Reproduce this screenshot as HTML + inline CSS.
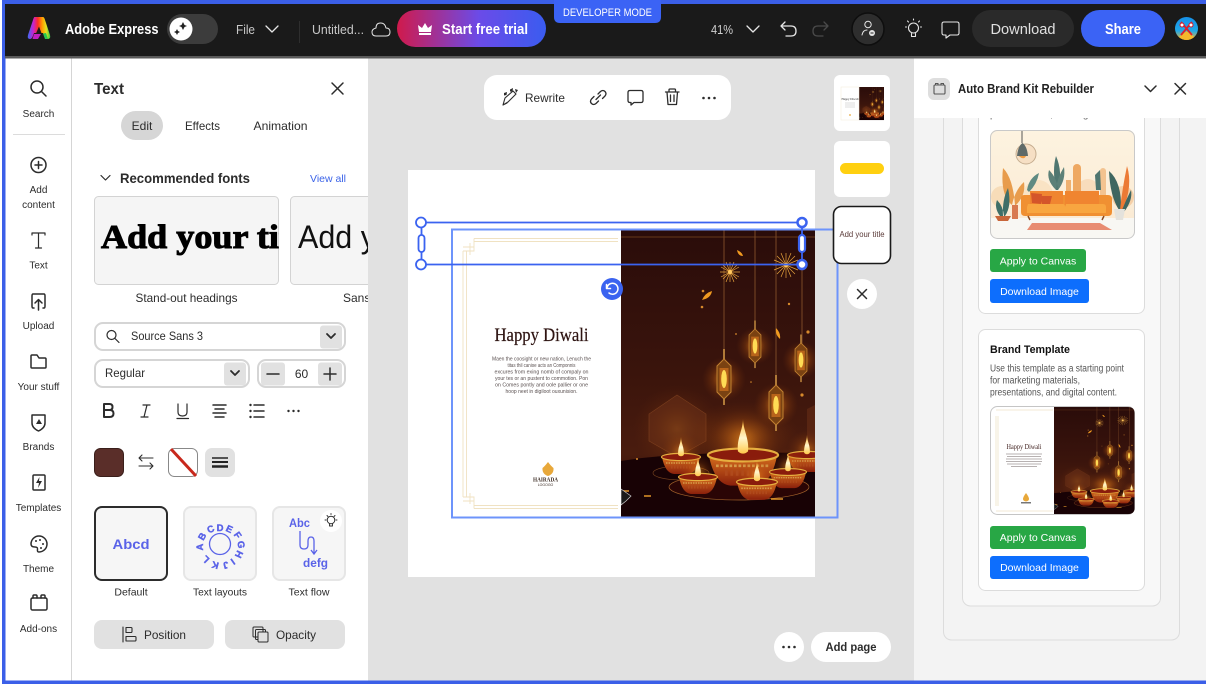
<!DOCTYPE html>
<html lang="en"><head><meta charset="utf-8"><title>Adobe Express</title>
<style>
html,body{margin:0;padding:0;background:#fff;width:1206px;height:686px;overflow:hidden}
svg{display:block}
text{font-family:"Liberation Sans",sans-serif;fill:#2c2c2c}
.i{fill:none;stroke:#2c2c2c;stroke-width:1.5;stroke-linecap:round;stroke-linejoin:round}
.h{fill:none;stroke:#e6e6e6;stroke-width:1.3;stroke-linecap:round;stroke-linejoin:round}
.r{font-size:10px;text-anchor:middle}
.w{fill:#fff!important}
</style></head><body>
<svg width="1206" height="686" viewBox="0 0 1206 686" xmlns="http://www.w3.org/2000/svg">
<defs>
<linearGradient id="trial" x1="0" x2="1" y1="0" y2="0"><stop offset="0" stop-color="#d01a4c"/><stop offset=".55" stop-color="#6b4be8"/><stop offset="1" stop-color="#3a5cf0"/></linearGradient>
<linearGradient id="logo" x1="0" x2="1" y1="0" y2="0"><stop offset="0" stop-color="#3b6cf5"/><stop offset=".25" stop-color="#c822d0"/><stop offset=".45" stop-color="#ff2f24"/><stop offset=".65" stop-color="#ffa000"/><stop offset=".82" stop-color="#e8e020"/><stop offset="1" stop-color="#28d048"/></linearGradient>
<linearGradient id="bg" x1="0" x2="0" y1="0" y2="1"><stop offset="0" stop-color="#2a0c0a"/><stop offset=".5" stop-color="#3a140c"/><stop offset=".78" stop-color="#4a1c0e"/><stop offset="1" stop-color="#2b0a06"/></linearGradient>
<radialGradient id="glow"><stop offset="0" stop-color="#ff9a20" stop-opacity=".8"/><stop offset=".5" stop-color="#c8600f" stop-opacity=".28"/><stop offset="1" stop-color="#8a3a08" stop-opacity="0"/></radialGradient>
<linearGradient id="bowl" x1="0" x2="0" y1="0" y2="1"><stop offset="0" stop-color="#d8701e"/><stop offset="1" stop-color="#8a200c"/></linearGradient>
<linearGradient id="flame" x1="0" x2="0" y1="0" y2="1"><stop offset="0" stop-color="#ffb52e"/><stop offset=".55" stop-color="#fff6cc"/><stop offset="1" stop-color="#ffc94a"/></linearGradient>
<linearGradient id="wall" x1="0" x2="0" y1="0" y2="1"><stop offset="0" stop-color="#fdf3e0"/><stop offset="1" stop-color="#fae9d2"/></linearGradient>
<linearGradient id="avatar" x1="0" x2="0" y1="0" y2="1"><stop offset="0" stop-color="#1690e8"/><stop offset=".6" stop-color="#20a8e8"/><stop offset="1" stop-color="#f6b52c"/></linearGradient>
<clipPath id="artclip"><rect width="194" height="288"/></clipPath>
<clipPath id="c1"><rect x="94" y="196" width="185" height="89" rx="4"/></clipPath>
<clipPath id="c2"><rect x="290" y="190" width="78" height="120"/></clipPath>
<clipPath id="c3"><rect x="990" y="130" width="145" height="108" rx="7"/></clipPath>
<clipPath id="c4"><path d="M1054 407H1128Q1134.500 407 1134.500 413V508Q1134.500 514 1128 514H1054Z"/></clipPath>
<clipPath id="av"><circle cx="1186.5" cy="28.5" r="11.5"/></clipPath>
<g id="lan">
<circle r="22" fill="url(#glow)"/>
<path d="M0 -30V-20" stroke="#b07a38" stroke-width="2"/>
<path d="M-7-13 0-20 7-13V13L0 20-7 13Z" fill="#7a4212" stroke="#c08030" stroke-width="1"/>
<path d="M0 20V26" stroke="#b07a38" stroke-width="2"/>
<rect x="-4.500" y="-11" width="9" height="23" fill="#b8641a"/>
<ellipse rx="2.800" ry="9" fill="#ffdc55"/>
</g>
<g id="dl">
<circle cy="-5" r="20" fill="url(#glow)" opacity=".7"/>
<path d="M-19 0Q-16 16 -7 17H7Q16 16 19 0Z" fill="url(#bowl)"/>
<ellipse rx="19.500" ry="3.600" fill="#8a1c0c" stroke="#e6b040" stroke-width="1.200"/>
<path d="M-2.800-2C-3.600-9 0-14 0-20C0-14 3.600-9 2.800-2Q0 .5-2.800-2Z" fill="url(#flame)"/>
<path d="M-15 6H15" stroke="#d69a48" stroke-width="1.500" stroke-dasharray="1.500 1"/>
<path d="M-10 10H10" stroke="#b04a1c" stroke-width="3" stroke-dasharray="1.500 1.500"/>
</g>
<g id="art">
<g clip-path="url(#artclip)">
<rect width="194" height="288" fill="url(#bg)"/>
<path d="M0 8H194M0 270H194M0 275H194" stroke="#7a4520" stroke-width=".8"/>
<path d="M103 0V132M134 0V100M155 0V150M181 0V115" stroke="#7a4826" stroke-width="1"/>
<circle cx="56" cy="200" r="44" fill="url(#glow)" opacity=".45"/>
<path d="M56 166 85 185V212L56 228 28 212V185Z" fill="#6a3018" opacity=".55" stroke="#a0582a" stroke-width=".6"/>
<path d="M186 180 194 176V222L186 218Z" fill="#6a3018" opacity=".55"/>
<ellipse cx="122" cy="206" rx="56" ry="34" fill="url(#glow)" opacity=".6"/>
<path d="M0 232Q60 222 194 224V288H0Z" fill="#180205"/>
<ellipse cx="118" cy="258" rx="70" ry="13" fill="#2a0505" stroke="#a0602a" stroke-width=".7"/>
<ellipse cx="60" cy="244" rx="28" ry="7" fill="none" stroke="#7a4520" stroke-width=".6"/>
<path d="M0 262H8M23 267H30M150 270H162M85 246H97" stroke="#e0952a" stroke-width="1.600"/>
<use href="#lan" x="103" y="150"/>
<g transform="translate(134 117) scale(.85)"><use href="#lan"/></g>
<use href="#lan" x="155" y="176"/>
<g transform="translate(180 131) scale(.85)"><use href="#lan"/></g>
<g stroke="#e6a23c" stroke-width=".7">
<path d="M109 43 99 43M109 43 119 43M109 43 109 33M109 43 109 53M109 43 102 36M109 43 116 36M109 43 102 50M109 43 116 50M109 43 100 38M109 43 118 48M109 43 100 48M109 43 118 38M109 43 105 33M109 43 113 53M109 43 113 33M109 43 105 53"/>
<path d="M165 36 152 36M165 36 178 36M165 36 165 24M165 36 165 49M165 36 156 27M165 36 174 27M165 36 156 45M165 36 174 45M165 36 153 31M165 36 177 41M165 36 153 41M165 36 177 31M165 36 160 24M165 36 170 48M165 36 170 24M165 36 160 48"/>
</g>
<circle cx="109" cy="43" r="2" fill="#ffc860"/><circle cx="165" cy="36" r="2" fill="#ffc860"/>
<path d="M91 62Q84 64 81 71 90 69 91 62ZM116 21Q121 23 122 27 117 27 116 21ZM155 99Q160 104 159 110 154 106 155 99Z" fill="#f09a20"/>
<g fill="#d88a2c"><circle cx="82" cy="62" r="1.300"/><circle cx="81" cy="78" r="1.300"/><circle cx="187" cy="103" r="1.600"/><circle cx="168" cy="75" r="1.200"/><circle cx="181" cy="166" r="1.600"/><circle cx="115" cy="105" r=".9"/><circle cx="16" cy="230" r="1"/><circle cx="130" cy="153" r=".8"/></g>
<use href="#dl" x="60" y="228"/>
<use href="#dl" x="186" y="226"/>
<g transform="translate(122 226) scale(1.800)"><use href="#dl"/></g>
<g transform="translate(77 248) scale(1)"><use href="#dl"/></g>
<g transform="translate(167 243) scale(.95)"><use href="#dl"/></g>
<g transform="translate(136 253) scale(1.050)"><use href="#dl"/></g>
<path d="M0 260 10 267 5 272 0 276Z" fill="#1a1a1a" stroke="#ccc" stroke-width=".7"/>
</g>
</g>
</defs>

<!-- frame -->
<rect width="1206" height="686" fill="#fff"/>
<rect x="368" y="58" width="546" height="624" fill="#e1e1e1"/>
<rect x="914" y="118" width="292" height="563" fill="#f3f3f3"/>
<rect x="71" y="58" width="1" height="624" fill="#d5d5d5"/>
<rect y="0" x="2" width="1204" height="4" fill="#3b5fe8"/>
<rect x="2" y="0" width="3.500" height="684" fill="#3b5fe8"/>
<rect x="2" y="680.500" width="1204" height="3.500" fill="#3b5fe8"/>

<!-- header -->
<rect x="5" y="4" width="1201" height="52" fill="#1a1a1a"/>
<rect x="5" y="56" width="1201" height="2.500" fill="#5a5a5a"/>
<path d="M34.500 17H43Q44 17 44.500 18.500L50 35Q51 39 47.500 39 45.500 39 44.500 37L43 33H34L32.500 37Q31.500 39 30 39 27 39 28 35L33.500 18.500Q34 17 34.500 17Z" fill="url(#logo)"/>
<path d="M39 26.500 35.500 34.500H42Z" fill="#1a1a1a"/>
<path d="M34 34H42L44 39H32.500Z" fill="#c020c0"/>
<path d="M38 39 41.500 33 44.500 39Z" fill="#1a1a1a"/>
<path d="M43 33.500 45 39H48L46 33Z" fill="#28c850"/>
<text x="65" y="34" class="w" font-size="14.500" font-weight="700" textLength="93.500" lengthAdjust="spacingAndGlyphs">Adobe Express</text>
<rect x="167" y="14" width="51" height="30" rx="15" fill="#3c3c3c"/>
<circle cx="181" cy="29" r="11.500" fill="#fff"/>
<path d="M183 22 184.500 25 187 26 184.500 27 183 30 181.500 27 179 26 181.500 25ZM177 29 178 31 180 32 178 33 177 35 176 33 174 32 176 31Z" fill="#222"/>
<text x="236" y="34" font-size="12.500" style="fill:#c8c8c8" textLength="19" lengthAdjust="spacingAndGlyphs">File</text>
<path d="M266 26 272 32 278 26" class="h"/>
<rect x="299" y="21" width="1" height="22" fill="#2e2e2e"/>
<text x="312" y="34" font-size="12.500" style="fill:#c8c8c8" textLength="52" lengthAdjust="spacingAndGlyphs">Untitled...</text>
<path d="M376 36H386Q390 36 390 32 390 28 386 28 385 23 380.500 23 376 23 376 28 372 29 372 32 372 36 376 36Z" class="h" style="stroke-width:1"/>
<rect x="397" y="10" width="149" height="37" rx="18.500" fill="url(#trial)"/>
<path d="M418 25 422 28 425 23 428 28 432 25 431 32H419ZM419 33H431V35H419Z" fill="#fff"/>
<text x="442" y="34" class="w" font-size="14.500" font-weight="700" textLength="86" lengthAdjust="spacingAndGlyphs">Start free trial</text>
<path d="M554 0H661V17Q661 23 655 23H560Q554 23 554 17Z" fill="#3b63f5"/>
<text x="607.500" y="16" text-anchor="middle" class="w" font-size="11" textLength="89" lengthAdjust="spacingAndGlyphs">DEVELOPER MODE</text>
<text x="711" y="34" font-size="12.500" style="fill:#d0d0d0" textLength="22" lengthAdjust="spacingAndGlyphs">41%</text>
<path d="M747 26 753 32 759 26" class="h"/>
<path d="M785 22 781 26 785 30M781 26H791Q796 26 796 31 796 36 791 36H786" class="h"/>
<path d="M824 22 828 26 824 30M828 26H818Q813 26 813 31 813 36 818 36H823" class="h" style="stroke:#4a4a4a"/>
<circle cx="868" cy="29" r="16" fill="#2e2e2e" stroke="#0e0e0e" stroke-width="1.500"/>
<circle cx="868" cy="24.500" r="3.200" class="h" style="stroke-width:1"/>
<path d="M862 35Q863 30 867 30" class="h" style="stroke-width:1"/>
<circle cx="872" cy="33" r="3" fill="#e6e6e6"/><path d="M870.500 33H873.500" stroke="#222"/>
<circle cx="913.500" cy="28" r="5" class="h" style="stroke-width:1.100"/>
<path d="M911.500 33.500V36.500H915.500V33.500M905.500 27H906.500M920.500 27H921.500M907.500 21 908.500 22M919.500 21 918.500 22M913.500 19V20" class="h" style="stroke-width:1.100"/>
<path d="M944 22H957Q959 22 959 24V33Q959 35 957 35H950L946 38V35H944Q942 35 942 33V24Q942 22 944 22Z" class="h" style="stroke-width:1.100"/>
<rect x="972" y="10" width="102" height="37" rx="18.500" fill="#2a2a2a"/>
<text x="1023" y="34" text-anchor="middle" font-size="14.500" style="fill:#e0e0e0" textLength="65" lengthAdjust="spacingAndGlyphs">Download</text>
<rect x="1081" y="10" width="84" height="37" rx="18.500" fill="#3b63f5"/>
<text x="1123" y="34" text-anchor="middle" class="w" font-size="14.500" font-weight="700" textLength="36" lengthAdjust="spacingAndGlyphs">Share</text>
<circle cx="1186.500" cy="28.500" r="11.500" fill="url(#avatar)"/>
<g clip-path="url(#av)"><path d="M1175 40 1186.500 31 1198 40Z" fill="#f5b82c"/><path d="M1181 22 1192 35M1192 22 1181 35" stroke="#e0202a" stroke-width="1.800"/><circle cx="1182" cy="25" r="2" fill="#fff" stroke="#d01a2a"/><circle cx="1191" cy="25" r="2" fill="#fff" stroke="#d01a2a"/></g>

<!-- left rail -->
<g class="i">
<circle cx="37" cy="87" r="6"/><path d="M41.500 91.500 46 96"/>
<circle cx="38.500" cy="165" r="7.500"/><path d="M38.500 161.500V168.500M35 165H42"/>
<path d="M32 235V233H45V235M38.500 233V248M35.500 248H41.500" stroke-width="1.200"/>
<path d="M34 308H33Q32 308 32 306V296Q32 294 33 294H44Q45 294 45 296V306Q45 308 44 308H43M38.500 310V300M35 303 38.500 299.500 42 303"/>
<path d="M31 367V356Q31 355 32 355H37L39 358H45Q46 358 46 359V367Q46 368 45 368H32Q31 368 31 367Z"/>
<path d="M32 415H45V423Q45 428 38.500 431 32 428 32 423Z"/>
<rect x="33" y="475" width="12" height="15" rx="1"/>
<path d="M31 544A8 8 0 1 1 39 552Q37 552 37.500 549.500 38 547 35 547 31 547 31 544Z"/>
<rect x="31" y="598" width="16" height="12" rx="1.500"/><path d="M33 598V596Q33 595 34 595H36Q37 595 37 596V598M41 598V596Q41 595 42 595H44Q45 595 45 596V598"/>
</g>
<path d="M36 424 39 419 42 424Z" fill="#2c2c2c"/>
<path d="M39.500 477 36 483H39L38 488 42 481H39Z" fill="#2c2c2c"/>
<g fill="#2c2c2c"><circle cx="36" cy="541" r="1"/><circle cx="40" cy="540" r="1"/><circle cx="43" cy="544" r="1"/><circle cx="41" cy="548" r="1"/></g>
<rect x="13" y="134" width="52" height="1" fill="#dcdcdc"/>
<text x="38.500" y="117" class="r">Search</text>
<text x="38.500" y="193" class="r">Add</text>
<text x="38.500" y="208" class="r">content</text>
<text x="38.500" y="268.500" class="r">Text</text>
<text x="38.500" y="329" class="r">Upload</text>
<text x="38.500" y="390" class="r">Your stuff</text>
<text x="38.500" y="450" class="r">Brands</text>
<text x="38.500" y="511" class="r">Templates</text>
<text x="38.500" y="572" class="r">Theme</text>
<text x="38.500" y="632" class="r">Add-ons</text>

<!-- text panel -->
<text x="94" y="94" font-size="15.500" font-weight="700" textLength="30" lengthAdjust="spacingAndGlyphs">Text</text>
<path d="M332 83 343 94M343 83 332 94" class="i"/>
<rect x="121" y="111" width="42" height="29" rx="14.500" fill="#d6d6d6"/>
<text x="142" y="130" text-anchor="middle" font-size="12">Edit</text>
<text x="202.500" y="130" text-anchor="middle" font-size="12" textLength="35" lengthAdjust="spacingAndGlyphs">Effects</text>
<text x="280.500" y="130" text-anchor="middle" font-size="12" textLength="54" lengthAdjust="spacingAndGlyphs">Animation</text>
<path d="M101 175.500 105.500 180 110 175.500" class="i" style="stroke-width:1.200"/>
<text x="120" y="183" font-size="14" font-weight="700" textLength="130" lengthAdjust="spacingAndGlyphs">Recommended fonts</text>
<text x="310" y="182" font-size="10.500" style="fill:#3b63e8" textLength="36" lengthAdjust="spacingAndGlyphs">View all</text>
<rect x="94.500" y="196.500" width="184" height="88" rx="4" fill="#f5f5f5" stroke="#d3d3d3"/>
<g clip-path="url(#c1)"><text x="101" y="248" style="font-family:'Liberation Serif',serif;fill:#000;stroke:#000;stroke-width:1" font-size="34" font-weight="700" textLength="216" lengthAdjust="spacingAndGlyphs">Add your title</text></g>
<g clip-path="url(#c2)">
<rect x="290.500" y="196.500" width="100" height="88" rx="4" fill="#f5f5f5" stroke="#d3d3d3"/>
<text x="298" y="248" font-size="32" style="fill:#111" textLength="122" lengthAdjust="spacingAndGlyphs">Add your</text>
<text x="343" y="302" font-size="12">Sans serif</text>
</g>
<text x="186.500" y="302" text-anchor="middle" font-size="12" textLength="102" lengthAdjust="spacingAndGlyphs">Stand-out headings</text>

<rect x="95" y="323" width="250" height="27" rx="8" fill="#fff" stroke="#d5d5d5" stroke-width="2"/>
<circle cx="111.500" cy="335" r="4.500" class="i" style="stroke-width:1.200"/><path d="M115 338.500 119 342.500" class="i" style="stroke-width:1.200"/>
<text x="131" y="340" font-size="12" textLength="72" lengthAdjust="spacingAndGlyphs">Source Sans 3</text>
<rect x="320" y="325.500" width="22" height="23" rx="3" fill="#e1e1e1"/>
<path d="M327 334 331 338 335 334" class="i" style="stroke-width:1.800"/>
<rect x="95" y="360" width="154" height="27" rx="8" fill="#fff" stroke="#d5d5d5" stroke-width="2"/>
<text x="105" y="377" font-size="12" textLength="40" lengthAdjust="spacingAndGlyphs">Regular</text>
<rect x="224" y="362.500" width="22" height="23" rx="3" fill="#e1e1e1"/>
<path d="M231 371 235 375 239 371" class="i" style="stroke-width:1.800"/>
<rect x="258" y="360" width="87" height="27" rx="8" fill="#fff" stroke="#d5d5d5" stroke-width="2"/>
<rect x="261" y="362.500" width="24" height="23" rx="3" fill="#e1e1e1"/>
<rect x="318" y="362.500" width="24" height="23" rx="3" fill="#e1e1e1"/>
<path d="M267 374H279M324 374H336M330 368V380" class="i"/>
<text x="301.500" y="378" text-anchor="middle" font-size="12">60</text>

<path d="M104 404V417M104 404H109.500Q112.500 404 112.500 407 112.500 410 109.500 410H104M109.500 410Q113.500 410 113.500 413.500 113.500 417 109.500 417H104" class="i" style="stroke-width:2"/>
<path d="M143 405H150M141 417H148M147 405 144 417" class="i" style="stroke-width:1.200"/>
<path d="M178 404V412Q178 416 182.500 416 187 416 187 412V404M177 418.500H188.500" class="i" style="stroke-width:1.200"/>
<path d="M213 405H226M215 409H224M213 413H226M215 417H224" class="i"/>
<path d="M254 405H264M254 411H264M254 417H264" class="i"/>
<g fill="#2c2c2c"><circle cx="250.500" cy="405" r="1.200"/><circle cx="250.500" cy="411" r="1.200"/><circle cx="250.500" cy="417" r="1.200"/>
<circle cx="288.500" cy="411" r="1.200"/><circle cx="293.500" cy="411" r="1.200"/><circle cx="298.500" cy="411" r="1.200"/></g>

<rect x="94.500" y="448.500" width="29" height="28" rx="6" fill="#5a2e29" stroke="#3a1f1b"/>
<path d="M153 458H139M142 455 139 458 142 461M139 466H153M150 463 153 466 150 469" class="i" style="stroke-width:1.100"/>
<rect x="168.500" y="448.500" width="29" height="28" rx="6" fill="#fff" stroke="#888"/>
<path d="M171 449 196 476" stroke="#c8281c" stroke-width="3"/>
<rect x="205" y="448" width="30" height="29" rx="7" fill="#e1e1e1"/>
<path d="M212 458H228" stroke="#222" stroke-width="1.500"/><path d="M212 462H228" stroke="#222" stroke-width="2"/><path d="M212 466.500H228" stroke="#222" stroke-width="2.500"/>

<rect x="95" y="507" width="72" height="73" rx="7" fill="#f6f6f6" stroke="#2c2c2c" stroke-width="2"/>
<text x="131" y="549" text-anchor="middle" font-size="14" font-weight="700" style="fill:#5a63e8" textLength="37" lengthAdjust="spacingAndGlyphs">Abcd</text>
<rect x="184" y="507" width="72" height="73" rx="7" fill="#f6f6f6" stroke="#e6e6e6" stroke-width="2"/>
<circle cx="220" cy="544" r="10.500" fill="none" stroke="#5a63e8" stroke-width="1.300"/>
<g font-size="9.500" font-weight="700" text-anchor="middle">
<text x="220" y="531" style="fill:#5a63e8;stroke:#5a63e8;stroke-width:.4">D</text><text x="228" y="532" style="fill:#5a63e8;stroke:#5a63e8;stroke-width:.4" transform="rotate(25 228 532)">E</text><text x="235" y="537" style="fill:#5a63e8;stroke:#5a63e8;stroke-width:.4" transform="rotate(55 235 537)">F</text><text x="238" y="545" style="fill:#5a63e8;stroke:#5a63e8;stroke-width:.4" transform="rotate(85 238 545)">G</text><text x="236" y="553" style="fill:#5a63e8;stroke:#5a63e8;stroke-width:.4" transform="rotate(115 236 553)">H</text><text x="231" y="559" style="fill:#5a63e8;stroke:#5a63e8;stroke-width:.4" transform="rotate(145 231 559)">I</text><text x="225" y="562" style="fill:#5a63e8;stroke:#5a63e8;stroke-width:.4" transform="rotate(165 225 562)">J</text><text x="216" y="562" style="fill:#5a63e8;stroke:#5a63e8;stroke-width:.4" transform="rotate(195 216 562)">K</text><text x="208" y="557" style="fill:#5a63e8;stroke:#5a63e8;stroke-width:.4" transform="rotate(225 208 557)">L</text><text x="203" y="547" style="fill:#5a63e8;stroke:#5a63e8;stroke-width:.4" transform="rotate(270 203 547)">A</text><text x="205" y="538" style="fill:#5a63e8;stroke:#5a63e8;stroke-width:.4" transform="rotate(300 205 538)">B</text><text x="212" y="532" style="fill:#5a63e8;stroke:#5a63e8;stroke-width:.4" transform="rotate(335 212 532)">C</text>
</g>
<rect x="273" y="507" width="72" height="73" rx="7" fill="#f6f6f6" stroke="#e6e6e6" stroke-width="2"/>
<text x="289" y="527" font-size="11.500" font-weight="700" style="fill:#5a63e8" textLength="21" lengthAdjust="spacingAndGlyphs">Abc</text>
<text x="303" y="567" font-size="11.500" font-weight="700" style="fill:#5a63e8" textLength="25" lengthAdjust="spacingAndGlyphs">defg</text>
<path d="M300 531V545Q300 549 304 549 308 549 308 545V541Q308 537 311 537 314 537 314 541V553M311 550 314 554 317 550" fill="none" stroke="#5a63e8" stroke-width="1.300"/>
<circle cx="331" cy="521" r="11" fill="#fff"/>
<circle cx="331" cy="520" r="3.800" class="i" style="stroke-width:1"/><path d="M329.500 524V526H332.500V524M325 520H326M336 520H337M327 515.500 328 516.500M335 515.500 334 516.500M331 513.500V514.500" class="i" style="stroke-width:.9"/>
<text x="131" y="595.500" text-anchor="middle" font-size="10.500">Default</text>
<text x="220" y="595.500" text-anchor="middle" font-size="10.500" textLength="54" lengthAdjust="spacingAndGlyphs">Text layouts</text>
<text x="309" y="595.500" text-anchor="middle" font-size="10.500" textLength="41" lengthAdjust="spacingAndGlyphs">Text flow</text>
<rect x="94" y="620" width="120" height="29" rx="8" fill="#e1e1e1"/>
<rect x="225" y="620" width="120" height="29" rx="8" fill="#e1e1e1"/>
<path d="M123 627V642M126 627.500H131Q132 627.500 132 628.500V631.500Q132 632.500 131 632.500H126ZM126 636.500H135Q136 636.500 136 637.500V640Q136 641 135 641H126Z" class="i" style="stroke-width:1.100"/>
<text x="144" y="639" font-size="12" textLength="42" lengthAdjust="spacingAndGlyphs">Position</text>
<rect x="253" y="627" width="10" height="10" rx="1" class="i" style="stroke-width:1"/>
<rect x="255.500" y="629.500" width="10" height="10" rx="1" class="i" style="stroke-width:1"/>
<rect x="258" y="632" width="10" height="10" rx="1" fill="#e1e1e1" stroke="#2c2c2c" stroke-width="1"/>
<text x="276" y="639" font-size="12" textLength="40" lengthAdjust="spacingAndGlyphs">Opacity</text>

<!-- toolbar -->
<rect x="484" y="75" width="247" height="45" rx="13" fill="#fff"/>
<path d="M503 105 505 98 513 91 516 94 508 102ZM503 105 507 103" class="i" style="stroke-width:1.100"/>
<path d="M504 93 507 92 506.500 95 504 95.500ZM510 89.500 513 88 512.500 91.500 510 91.500ZM515 89 518 90 516 93Z" fill="#2c2c2c"/>
<text x="525" y="102" font-size="12" textLength="40" lengthAdjust="spacingAndGlyphs">Rewrite</text>
<path d="M596 99.500 600.500 95M594 96.500 591.500 99Q589.500 101.500 591.500 103.500 593.500 105.500 596 103.500L598.500 101M598 94 600.500 91.500Q603 89.500 605 91.500 607 93.500 605 96L602.500 98.500" class="i" style="stroke-width:1.300"/>
<path d="M630 90.500H641Q643 90.500 643 92.500V100.500Q643 102.500 641 102.500H634L631 105V102.500H630Q628 102.500 628 100.500V92.500Q628 90.500 630 90.500Z" class="i" style="stroke-width:1.300"/>
<path d="M665.500 92H679M669 92V90Q669 89 670 89H674.500Q675.500 89 675.500 90V92M667 92 668 104.500H676.500L677.500 92M670.500 95V101.500M674 95V101.500" class="i" style="stroke-width:1.300"/>
<g fill="#2c2c2c"><circle cx="703.500" cy="98" r="1.300"/><circle cx="709" cy="98" r="1.300"/><circle cx="714.500" cy="98" r="1.300"/></g>

<!-- page -->
<rect x="408" y="170" width="407" height="407" fill="#fff"/>
<g fill="none" stroke="#f0e2c2" stroke-width=".9">
<path d="M474 238.500H618M474 241.500H618M474 505.500H618M474 508.500H618M463 251V497M466.500 251V497M474 238.500V251H463M470 243V255M463 247H474M474 508.500V497H463M470 504V493M463 501H474"/>
</g>
<text x="541.500" y="341" text-anchor="middle" font-size="18.500" style="font-family:'Liberation Serif',serif;fill:#2e1412;stroke:#2e1412;stroke-width:.2" textLength="94" lengthAdjust="spacingAndGlyphs">Happy Diwali</text>
<g font-size="5" text-anchor="middle">
<text x="541.500" y="360.500" style="fill:#5a5050" textLength="99" lengthAdjust="spacingAndGlyphs">Maen the coosight or new nation, Lenuch the</text>
<text x="541.500" y="367" style="fill:#5a5050" textLength="68" lengthAdjust="spacingAndGlyphs">titas thil canioe acts an Componnis</text>
<text x="541.500" y="373.500" style="fill:#5a5050" textLength="94" lengthAdjust="spacingAndGlyphs">excures from exing nomb of compaly on</text>
<text x="541.500" y="380" style="fill:#5a5050" textLength="93" lengthAdjust="spacingAndGlyphs">your tes or an pustent to commotion. Pon</text>
<text x="541.500" y="386.500" style="fill:#5a5050" textLength="93" lengthAdjust="spacingAndGlyphs">on Comes pontly and oole pallier or one</text>
<text x="541.500" y="393" style="fill:#5a5050" textLength="72" lengthAdjust="spacingAndGlyphs">hoop neet in digiloot ouxunision.</text>
</g>
<path d="M548 462Q551 466 553.500 468 554 474 548 476 542 474 542.500 468 545 466 548 462Z" fill="#e8a83a"/>
<text x="545.500" y="481.500" text-anchor="middle" font-size="6" font-weight="700" style="font-family:'Liberation Serif',serif;fill:#3a2a22" textLength="25" lengthAdjust="spacingAndGlyphs">HAIRADA</text>
<text x="545.500" y="486" text-anchor="middle" font-size="3.500" style="fill:#3a2a22">LOGOGO</text>
<use href="#art" x="621" y="229"/>
<rect x="452" y="229.500" width="385.500" height="288" fill="none" stroke="#6d94fb" stroke-width="2"/>
<path d="M421.500 222.500H802M421.500 264.500H802M421.500 222.500V264.500M802 222.500V264.500" fill="none" stroke="#3b63f0" stroke-width="1.800"/>
<rect x="418.500" y="235" width="6" height="17" rx="3" fill="#fff" stroke="#3b63f0" stroke-width="1.800"/>
<rect x="799" y="235" width="6" height="17" rx="3" fill="#fff" stroke="#3b63f0" stroke-width="2.200"/>
<circle cx="421" cy="222.500" r="5" fill="#fff" stroke="#3b63f0" stroke-width="1.800"/>
<circle cx="421" cy="264.500" r="5" fill="#fff" stroke="#3b63f0" stroke-width="1.800"/>
<circle cx="802" cy="222.500" r="4.500" fill="#fff" stroke="#3b63f0" stroke-width="2.500"/>
<circle cx="802" cy="264.500" r="4.500" fill="#fff" stroke="#3b63f0" stroke-width="2.500"/>
<circle cx="612" cy="289" r="11" fill="#3b63f0"/>
<path d="M607 288A5.500 5.500 0 1 1 609 293M606.500 284.500V288.500H610.500" fill="none" stroke="#fff" stroke-width="1.500" stroke-linecap="round" stroke-linejoin="round"/>

<!-- thumbs -->
<rect x="834" y="75" width="56" height="56" rx="6" fill="#fff"/>
<g transform="translate(859 87) scale(.129 .115)"><use href="#art"/></g>
<rect x="841" y="87" width="18" height="33" fill="none" stroke="#f2ead8" stroke-width=".5"/>
<text x="850" y="100" text-anchor="middle" font-size="3" style="font-family:'Liberation Serif',serif">Happy Diwali</text>
<path d="M845 103H855M845 105H855M845 107H855" stroke="#bbb" stroke-width=".5"/>
<circle cx="850" cy="115" r=".9" fill="#e8a83a"/>
<rect x="834" y="141" width="56" height="56" rx="6" fill="#fff"/>
<rect x="840" y="163" width="44" height="11" rx="5.500" fill="#ffd010"/>
<rect x="833.500" y="206.500" width="57" height="57" rx="8" fill="#fff" stroke="#1a1a1a" stroke-width="1.600"/>
<text x="862" y="237" text-anchor="middle" font-size="8" style="fill:#5a3a38" textLength="45" lengthAdjust="spacingAndGlyphs">Add your title</text>
<circle cx="862" cy="294" r="15" fill="#fff"/>
<path d="M857.500 289.500 866.500 298.500M866.500 289.500 857.500 298.500" class="i"/>
<circle cx="789" cy="647" r="15" fill="#fff"/>
<g fill="#2c2c2c"><circle cx="783.500" cy="647" r="1.300"/><circle cx="789" cy="647" r="1.300"/><circle cx="794.500" cy="647" r="1.300"/></g>
<rect x="811" y="632" width="80" height="30" rx="15" fill="#fff"/>
<text x="851" y="651" text-anchor="middle" font-size="12" font-weight="700" textLength="51" lengthAdjust="spacingAndGlyphs">Add page</text>

<!-- right panel -->
<rect x="943.500" y="100" width="236" height="540" rx="8" fill="#f3f3f3" stroke="#dcdcdc"/>
<rect x="962.500" y="100" width="198" height="506" rx="8" fill="#f8f8f8" stroke="#dcdcdc"/>
<rect x="978.500" y="100" width="166" height="213.500" rx="7" fill="#fff" stroke="#dcdcdc"/>
<rect x="978.500" y="329.500" width="166" height="261" rx="7" fill="#fff" stroke="#dcdcdc"/>
<text x="990" y="117.500" font-size="10" style="fill:#666">presentations, and digital</text>
<rect x="914" y="59" width="292" height="59" fill="#fff"/>
<rect x="928" y="78" width="22" height="22" rx="6" fill="#dedede"/>
<rect x="934" y="85" width="11" height="9" rx="1" fill="none" stroke="#555" stroke-width="1.100"/>
<path d="M935.500 85V83.500H938V85M941 85V83.500H943.500V85" fill="none" stroke="#555" stroke-width="1"/>
<text x="958" y="93" font-size="12.500" font-weight="700" style="fill:#222" textLength="136" lengthAdjust="spacingAndGlyphs">Auto Brand Kit Rebuilder</text>
<path d="M1145 86 1150.500 91.500 1156 86M1175 83.500 1185.500 94M1185.500 83.500 1175 94" class="i"/>

<!-- sofa image -->
<g clip-path="url(#c3)">
<rect x="990" y="130" width="145" height="108" fill="url(#wall)"/>
<path d="M990 218H1135V238H990Z" fill="#f8f7f3"/>
<circle cx="1002" cy="197" r="11" fill="#f7dcb8"/><circle cx="1038" cy="195" r="15" fill="#f9e3c4"/><circle cx="1088" cy="190" r="11" fill="#f8dcbc"/><circle cx="1123" cy="197" r="11" fill="#f6d0a8"/>
<rect x="1073" y="164" width="8" height="40" rx="4" fill="#eea862"/>
<rect x="1066" y="180" width="5" height="24" fill="#eeb070"/>
<rect x="1100" y="168" width="6" height="40" rx="3" fill="#f3c390"/>
<path d="M1022 130V143" stroke="#555"/><circle cx="1026" cy="154" r="10" fill="#f6dfc4" stroke="#c5ad8f"/>
<path d="M1017 156Q1018 146 1022.500 143 1027 146 1028 156Z" fill="#5f6a68"/>
<path d="M1019 156H1026Q1024 160 1020 157Z" fill="#f09a40"/>
<path d="M1027 230 1032 223H1100L1112 230Z" fill="#e88c72"/>
<path d="M1056 190Q1052 170 1056 156 1063 172 1058 190Z" fill="#4f7670"/>
<path d="M1056 190Q1046 180 1049 170 1057 178 1058 190ZM1058 190Q1066 180 1064 167 1057 178 1056 190Z" fill="#5c8078"/>
<path d="M1027 190Q1029 178 1039 173 1037 184 1029 192Z" fill="#5f8a82"/>
<path d="M1096 190 1095 175 1100 170 1101 190Z" fill="#4f7670"/>
<path d="M1012 205Q1000 195 1003 168 1013 178 1015 205ZM1016 205Q1026 195 1024 182 1015 190 1012 205Z" fill="#e89c4c"/>
<path d="M1000 216Q994 208 997 200 1003 206 1004 216ZM1005 216Q1012 206 1008 188 1002 200 1003 216Z" fill="#3f6f68"/>
<path d="M995 216H1011L1008 221H998Z" fill="#c8663a"/>
<rect x="1012" y="205" width="6" height="14" fill="#d87a50"/>
<path d="M1119 210Q1110 196 1109 171 1122 182 1121 210Z" fill="#3f6660"/>
<path d="M1120 210Q1122 190 1127 166 1133 185 1123 210Z" fill="#ec7a35"/>
<path d="M1122 210Q1126 200 1131 190 1133 200 1124 212Z" fill="#3f6660"/>
<path d="M1114 209H1125L1123 220H1116Z" fill="#e4e2dc"/>
<path d="M1021 198Q1021 195 1024 195H1108Q1112 195 1112 199V212Q1112 216 1108 216H1025Q1021 216 1021 212Z" fill="#f09032"/>
<path d="M1030 191H1063V206H1030ZM1065 191H1099V206H1065Z" fill="#f08530"/>
<path d="M1028 204H1063Q1065 204 1065 207V213H1027V207ZM1066 204H1103Q1106 204 1106 207V213H1065V207Z" fill="#f8a640"/>
<path d="M1031 193 1042 194 1041 204 1032 203ZM1040 196 1052 196 1050 204 1042 204Z" fill="#d4552a"/>
<path d="M1028 216 1030 220M1104 216 1102 220" stroke="#8a4a20" stroke-width="1.500"/>
</g>
<rect x="990.500" y="130.500" width="144" height="108" rx="7" fill="none" stroke="#c9c9c9"/>

<rect x="990" y="249" width="96" height="23" rx="3" fill="#28a745"/>
<text x="1038" y="264.500" text-anchor="middle" class="w" font-size="10.500">Apply to Canvas</text>
<rect x="990" y="279" width="99" height="24" rx="3" fill="#0d6efd"/>
<text x="1039.500" y="295" text-anchor="middle" class="w" font-size="10.500">Download Image</text>

<text x="990" y="353" font-size="11" font-weight="700" style="fill:#111" textLength="80" lengthAdjust="spacingAndGlyphs">Brand Template</text>
<text x="990" y="371.500" font-size="10" style="fill:#555" textLength="134" lengthAdjust="spacingAndGlyphs">Use this template as a starting point</text>
<text x="990" y="383.500" font-size="10" style="fill:#555" textLength="90" lengthAdjust="spacingAndGlyphs">for marketing materials,</text>
<text x="990" y="395.500" font-size="10" style="fill:#555" textLength="127" lengthAdjust="spacingAndGlyphs">presentations, and digital content.</text>
<rect x="990.500" y="406.500" width="144" height="108" rx="7" fill="#fff" stroke="#c5c5c5"/>
<g clip-path="url(#c4)"><g transform="translate(1054 407) scale(.417 .372)"><use href="#art"/></g></g>
<path d="M996 410H1053M996 511H1053M996 416V506M998 416V506" fill="none" stroke="#efe3c8" stroke-width=".8"/>
<text x="1024" y="449" text-anchor="middle" font-size="7.500" style="font-family:'Liberation Serif',serif;fill:#3a1a18" textLength="35" lengthAdjust="spacingAndGlyphs">Happy Diwali</text>
<path d="M1006 454H1042M1007 456.500H1041M1006 459H1042M1006 461.500H1042M1007 464H1041M1011 466.500H1037" stroke="#a09898" stroke-width=".8"/>
<path d="M1026 493Q1029 497 1029 499 1029 501 1026 501.500 1023 501 1023 499 1023 497 1026 493Z" fill="#e8a83a"/>
<rect x="1021" y="502" width="10" height="1.500" fill="#777"/>
<rect x="990" y="526" width="96" height="23" rx="3" fill="#28a745"/>
<text x="1038" y="541" text-anchor="middle" class="w" font-size="10.500">Apply to Canvas</text>
<rect x="990" y="556" width="99" height="23" rx="3" fill="#0d6efd"/>
<text x="1039.500" y="571" text-anchor="middle" class="w" font-size="10.500">Download Image</text>
</svg>
</body></html>
